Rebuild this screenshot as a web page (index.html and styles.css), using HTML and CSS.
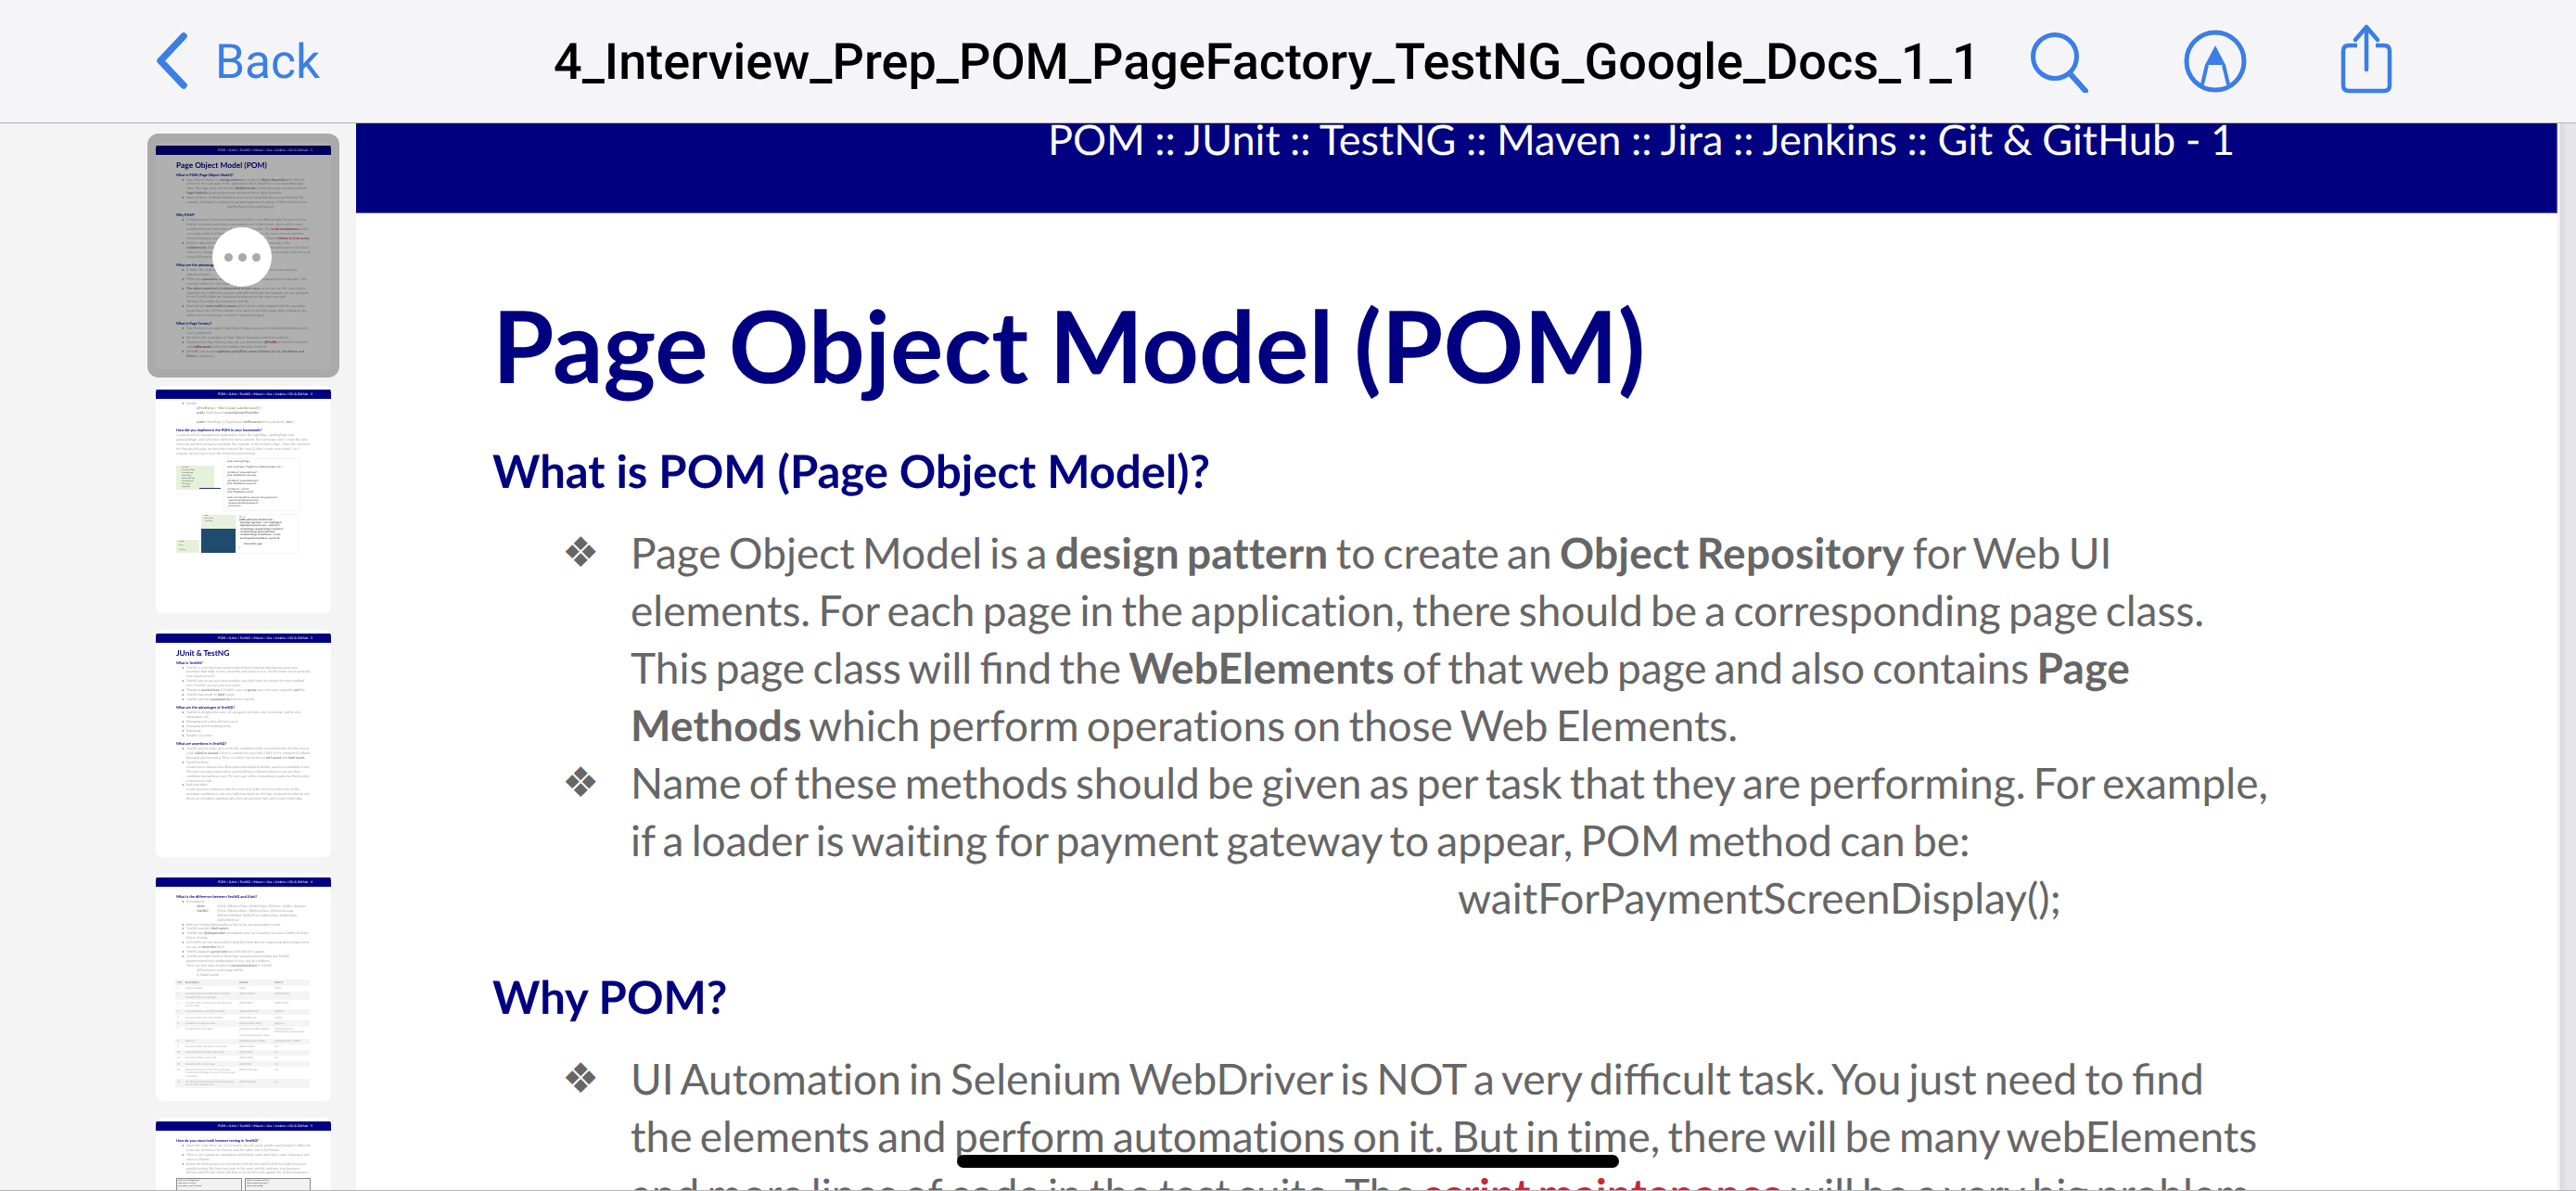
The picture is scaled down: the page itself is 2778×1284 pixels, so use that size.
FILE: index.html
```html
<!DOCTYPE html>
<html>
<head>
  <title>PDF Viewer</title>
  <meta name="viewport" content="width=device-width, initial-scale=1">
  <link rel="stylesheet" href="styles.css">
</head>
<body>
  <header class="topbar">
    <a class="back">
      <svg class="back-icon" width="37" height="61" viewBox="0 0 37 61"><path d="M33 4 L8 30.5 L33 57" fill="none" stroke="#3b7ee6" stroke-width="7.5" stroke-linecap="round" stroke-linejoin="round"/></svg>
      <span>Back</span>
    </a>
    <h1 class="doc-title">4_Interview_Prep_POM_PageFactory_TestNG_Google_Docs_1_1</h1>
    <div class="tools">
      <svg class="tool-search" width="66" height="66" viewBox="0 0 66 66"><circle cx="27" cy="27" r="23.5" fill="none" stroke="#3b7ee6" stroke-width="5"/><path d="M43 45 L60 64" fill="none" stroke="#3b7ee6" stroke-width="6" stroke-linecap="round"/></svg>
      <svg class="tool-markup" width="68" height="68" viewBox="0 0 68 68"><circle cx="34" cy="34" r="31" fill="none" stroke="#3b7ee6" stroke-width="5"/><path d="M34 17 L45 38 L23 38 Z" fill="#3b7ee6"/><path d="M25 38 L20 59 M43 38 L48 59" fill="none" stroke="#3b7ee6" stroke-width="4"/></svg>
      <svg class="tool-share" width="60" height="76" viewBox="0 0 60 76"><path d="M18 23 H9 Q3 23 3 29 V66 Q3 72 9 72 H47 Q53 72 53 66 V29 Q53 23 47 23 H38" fill="none" stroke="#3b7ee6" stroke-width="4.5"/><path d="M28 49 V3 M16 17 L28 3 L40 17" fill="none" stroke="#3b7ee6" stroke-width="4.5" stroke-linecap="round" stroke-linejoin="round"/></svg>
    </div>
  </header>

  <div class="viewer">
    <aside class="sidebar">
      <div class="thumb-selected">
        <div class="thumb">
          <div class="thumb-band">POM :: JUnit :: TestNG :: Maven :: Jira :: Jenkins :: Git &amp; GitHub - 1</div>
          <div class="thumb-body">
            <div class="thumb-h1">Page Object Model (POM)</div>
            <div class="thumb-h2 thumb-h2-sub">What is POM (Page Object Model)?</div>
            <ul class="thumb-list">
              <li>Page Object Model is a <b>design pattern</b> to create an <b>Object Repository</b> for Web UI elements. For each page in the application, there should be a corresponding page class. This page class will ﬁnd the <b>WebElements</b> of that web page and also contains <b>Page Methods</b> which perform operations on those Web Elements.</li>
              <li>Name of these methods should be given as per task that they are performing. For example, if a loader is waiting for payment gateway to appear, POM method can be:<div class="thumb-code">waitForPaymentScreenDisplay();</div></li>
            </ul>
            <div class="thumb-h2">Why POM?</div>
            <ul class="thumb-list">
              <li>UI Automation in Selenium WebDriver is NOT a very diﬃcult task. You just need to ﬁnd the elements and perform automations on it. But in time, there will be many webElements and more lines of code in the test suite. The <em>script maintenance</em> will be a very big problem. If there are so many tests that use the same element and that element changes, you will have to change all 80 scripts. That is <em>tedious &amp; error prone.</em></li>
              <li>A better approach is to keep all the elements of a page in one place, like <b>webElements</b>. All an activity here. The main script stays clean and easy to read. Even if there is a change in the element locator, we just change it in one place and not in all of our different test scripts.</li>
            </ul>
            <div class="thumb-h2">What are the advantages of POM?</div>
            <ul class="thumb-list">
              <li>It makes the code more readable, reusable and it also will have less and more optimised codes.</li>
              <li>POM says <b>operations</b> and flows in the UI should be separate from verification. This concept makes the code clean and simple.</li>
              <li><b>The object repository is independent of test cases</b>, so we can use the same object repository for a different purpose with different tools. For example, we can integrate it with TestNG/JUnit for functional testing and at the same time with JBehave/Cucumber for acceptance testing.</li>
              <li>Methods get <b>more realistic names</b> which can be easily mapped with the operation happening in the UI. For example, if we land on the home page after clicking on the button, the method name would be "gotoHomePage()".</li>
            </ul>
            <div class="thumb-h2">What is Page Factory?</div>
            <ul class="thumb-list">
              <li>Page Factory is an inbuilt Page Object Model concept for Selenium WebDriver but it is very optimized.</li>
              <li>We follow the separation of Page Object Repository and Test methods.</li>
              <li>Thanks to the Page Factory class, we use annotations <em>@FindBy</em> to ﬁnd the elements and <em>initElements</em> method to initialize the web elements.</li>
              <li>@FindBy can accept <b>tagName, partialText, name, linkText, id, css, className, and XPath</b> as attributes.</li>
            </ul>
          </div>
        </div>
        <div class="thumb-dim"></div>
        <div class="thumb-more"><i></i><i></i><i></i></div>
      </div>

      <div class="thumb">
        <div class="thumb-band">POM :: JUnit :: TestNG :: Maven :: Jira :: Jenkins :: Git &amp; GitHub - 2</div>
        <div class="thumb-body thumb-body-tight">
          <ul class="thumb-list">
            <li>Similar:
              <div class="thumb-snippet"><span class="green">@FindBy(css = "title='Create Calendar event']")</span><br><b>public</b> WebElement <b>createCalendarEventBtn</b>;<br><br><b>public</b> HomePage () { PageFactory.<b>initElements</b>(driver.getDriver(), <b>this</b>); }</div>
            </li>
          </ul>
          <div class="thumb-h2">How did you implement the POM in your framework?</div>
          <p class="thumb-p">I work on a fleet management application. I have the loginPage, LandingPage, and passwordPage, and I also have different menu options. For each page class, I store the web elements and their behavior methods. For example, in the Vehicles Page, I have the elements for that specific page and also their actions like save &amp; close, create new vehicle, etc. I separate all test cases from the elements and methods.</p>
          <div class="shot-row">
            <div class="shot-tree">
              <span>src/test</span><span>CommonSteps</span><span>LandingPage</span><span>LoginPage</span><span>PasswordPage</span><span>VehiclesPage</span><span>BasePage</span><span>LoginTest</span>
            </div>
            <div class="shot-arrow"></div>
            <div class="shot-code">public class LoginPage {<br><br>public LoginPage() { PageFactory.initElements(get(), this); }<br><br>@FindBy(id="prependedInput")<br>public WebElement username;<br><br>@FindBy(id="prependedInput2")<br>public WebElement password;<br><br>@FindBy(id="_submit")<br>public WebElement submit;<br><br>public void login(String username, String password) {<br>&nbsp;&nbsp;username.sendKeys(username);<br>&nbsp;&nbsp;password.sendKeys(password);<br>&nbsp;&nbsp;submit.click();<br>}</div>
          </div>
          <div class="shot-row-2">
            <div class="shot-side"><span>pages</span><span>tests</span><span>utilities</span></div>
            <div class="shot-stack">
              <div class="shot-stack-top">tests<br>&nbsp;login_tests<br>&nbsp;&nbsp;LoginTest</div>
              <div class="shot-stack-dark"></div>
            </div>
            <div class="shot-code shot-code-dark"><span class="green">@Test</span><br><b>public void</b> contactDetailsTest() {<br>&nbsp;LoginPage loginPage = new LoginPage();<br>&nbsp;loginPage.login(username, "sales100");<br>&nbsp;contactsPage.navigateToPage("Contacts");<br>&nbsp;contactInfoPage.getContactInfo();<br>&nbsp;contactInfoPage.contactName = new();<br>&nbsp;assertEquals(contactName, expected);<br>&nbsp;<br>&nbsp;&nbsp;&nbsp;&nbsp;&nbsp;&nbsp;"Information page";<br>}</div>
          </div>
        </div>
      </div>

      <div class="thumb">
        <div class="thumb-band">POM :: JUnit :: TestNG :: Maven :: Jira :: Jenkins :: Git &amp; GitHub - 3</div>
        <div class="thumb-body">
          <div class="thumb-h1">JUnit &amp; TestNG</div>
          <div class="thumb-h2 thumb-h2-sub">What is TestNG?</div>
          <ul class="thumb-list">
            <li>TestNG is a testing framework inspired from JUnit but introducing some new functions that make it more powerful and easier to use. TestNG helps you to generate test reports as well.</li>
            <li>TestNG can act as your Java compiler; you don't have to include the main method since TestNG can run your test codes.</li>
            <li>Thanks to <b>annotations</b> in TestNG, you can <b>group</b> your test cases using the <b>xml</b> file.</li>
            <li>TestNG has a built-in <b>html</b> report.</li>
            <li>TestNG can also <b>parameterize</b> from the xml file.</li>
          </ul>
          <div class="thumb-h2">What are the advantages of TestNG?</div>
          <ul class="thumb-list">
            <li>TestNG is designed to cover all categories of tests: unit, functional, end-to-end, integration, etc.</li>
            <li>Managing test suites and test cases.</li>
            <li>Grouping and Prioritizing tests.</li>
            <li>Reporting.</li>
            <li>Parallel execution.</li>
          </ul>
          <div class="thumb-h2">What are assertions in TestNG?</div>
          <ul class="thumb-list">
            <li>TestNG asserts helps us to verify the condition of the test and decide whether test is a fail, <b>failed or passed</b>. A test is considered successful ONLY if it is completed without throwing any exception. There is a difference between <b>soft assert</b> and <b>hard assert</b>.</li>
            <li>Hard Assertion:<br>A hard assert throws AssertException immediately and the assertion condition is met. The test execution stops when an AssertError is thrown whenever an assertion condition has not been met. The test case will be immediately marked as Failed when a hard assert fails.</li>
            <li>Soft Assertion:<br>A soft assertion continues with the next step of the test even when one of the assertion conditions is not met. Soft Assertions are the type of assertions that do not throw an exception automatically when an assertion fails and record it internally.</li>
          </ul>
        </div>
      </div>

      <div class="thumb">
        <div class="thumb-band">POM :: JUnit :: TestNG :: Maven :: Jira :: Jenkins :: Git &amp; GitHub - 4</div>
        <div class="thumb-body">
          <div class="thumb-h2 thumb-h2-first">What is the difference between TestNG and JUnit?</div>
          <ul class="thumb-list">
            <li>Annotations:
              <div class="thumb-notes"><span><b>JUnit:</b></span><span>@Test, @BeforeClass, @AfterClass, @Before, @After, @Ignore</span><span><b>TestNG:</b></span><span>@Test, @BeforeSuite, @BeforeClass, @BeforeGroups, @BeforeMethod, @AfterTest, @AfterClass, @AfterSuite, @AfterMethod</span></div>
            </li>
            <li>Both are testing frameworks to help us to run automation scripts.</li>
            <li>TestNG provides <b>html report.</b></li>
            <li>TestNG has <b>@dataprovider</b> annotation same as Cucumber Scenario Outline for Data Driven Testing.</li>
            <li>In TestNG, we can do parallel testing but JUnit doesn't support parallel testing unless we use an <b>extension</b> for it.</li>
            <li>TestNG supports <b>group test</b> but JUnit doesn't support.</li>
            <li>TestNG and JUnit both of them have parameterized testing but TestNG parameterized test configuration is very easy to configure.<br>There are two ways to achieve <b>parameterization</b> in TestNG.
              <div class="thumb-sub">@Parameters and testng.xml file</div>
              <div class="thumb-sub">@ DataProvider</div>
            </li>
          </ul>
          <table class="thumb-table">
            <tr class="row-alt"><th>S.N.</th><th>Description</th><th>TestNG</th><th>JUnit 4</th></tr>
            <tr><td>1</td><td>Test annotation</td><td>@Test</td><td>@Test</td></tr>
            <tr class="row-alt"><td>2</td><td>Executes before the first test method is invoked in the current class</td><td>@BeforeClass</td><td>@BeforeClass</td></tr>
            <tr><td>3</td><td>Executes after all the test methods in the current class</td><td>@AfterClass</td><td>@AfterClass</td></tr>
            <tr class="row-alt"><td>4</td><td>Executes before each test method</td><td>@BeforeMethod</td><td>@Before</td></tr>
            <tr><td>5</td><td>Executes after each test method</td><td>@AfterMethod</td><td>@After</td></tr>
            <tr class="row-alt"><td>6</td><td>annotation to ignore a test</td><td>@Test(enable=false)</td><td>@Ignore</td></tr>
            <tr><td>7</td><td>annotation for exception</td><td>@Test(expectedExceptions = ArithmeticException.class)</td><td>@Test(expected = ArithmeticException.class)</td></tr>
            <tr class="row-alt"><td>8</td><td>timeout</td><td>@Test(timeout = 1000)</td><td>@Test(timeout = 1000)</td></tr>
            <tr><td>9</td><td>Executes before all tests in the suite</td><td>@BeforeSuite</td><td>n/a</td></tr>
            <tr class="row-alt"><td>10</td><td>Executes after all tests in the suite</td><td>@AfterSuite</td><td>n/a</td></tr>
            <tr><td>11</td><td>Executes before a test runs</td><td>@BeforeTest</td><td>n/a</td></tr>
            <tr class="row-alt"><td>12</td><td>Executes after a test runs</td><td>@AfterTest</td><td>n/a</td></tr>
            <tr><td>13</td><td>Executes before the first test method is invoked that belongs to any of these groups is invoked</td><td>@BeforeGroups</td><td>n/a</td></tr>
            <tr class="row-alt"><td>14</td><td>run after the last test method that belongs to any of the groups here</td><td>@AfterGroups</td><td>n/a</td></tr>
          </table>
        </div>
      </div>

      <div class="thumb">
        <div class="thumb-band">POM :: JUnit :: TestNG :: Maven :: Jira :: Jenkins :: Git &amp; GitHub - 5</div>
        <div class="thumb-body">
          <div class="thumb-h2 thumb-h2-first">How do you cross/multi browser testing in TestNG?</div>
          <ul class="thumb-list">
            <li>Inside the suite there are 3 test frames, thread count, parallel and included 2 different tests, one of them is for Chrome and the other one is for Firefox.</li>
            <li>There is one parameter annotation and include name and value; name is browser and value is Chrome.</li>
            <li>Below the first picture is a screenshot with the xml and TestNG for multi cross and parallel testing. We have two tests in the same xml file and have two browsers (chrome and firefox) which will help us to run the tests against the defined browsers.</li>
          </ul>
          <div class="shot-xml">
            <div class="shot-xml-pane">suite name="Regression"<br>test name="chrome"<br>parameter name="browser"</div>
            <div class="shot-xml-pane">public class BrowserTest {<br>@Parameters("browser")<br>public void setUp()</div>
          </div>
        </div>
      </div>
    </aside>

    <main class="doc">
      <div class="doc-band">POM :: JUnit :: TestNG :: Maven :: Jira :: Jenkins :: Git &amp; GitHub - 1</div>
      <section class="doc-body">
        <h2 class="doc-h1">Page Object Model (POM)</h2>
        <h3 class="doc-h2">What is POM (Page Object Model)?</h3>
        <ul class="doc-list">
          <li>Page Object Model is a <strong>design pattern</strong> to create an <strong>Object Repository</strong> for Web UI elements. For each page in the application, there should be a corresponding page class. This page class will ﬁnd the <strong>WebElements</strong> of that web page and also contains <strong>Page Methods</strong> which perform operations on those Web Elements.</li>
          <li>Name of these methods should be given as per task that they are performing. For example, if a loader is waiting for payment gateway to appear, POM method can be:
            <div class="doc-code">waitForPaymentScreenDisplay();</div>
          </li>
        </ul>
        <h3 class="doc-h2">Why POM?</h3>
        <ul class="doc-list">
          <li>UI Automation in Selenium WebDriver is NOT a very diﬃcult task. You just need to ﬁnd the elements and perform automations on it. But in time, there will be many webElements and more lines of code in the test suite. The <strong class="doc-red">script maintenance</strong> will be a very big problem.</li>
        </ul>
      </section>
    </main>
    <div class="doc-edge"></div>
  </div>

  <div class="home-bar"></div>
</body>
</html>
```

FILE: styles.css
```css
* { box-sizing: border-box; }
html, body { height: 100%; }
body { margin: 0; overflow: hidden; background: #f4f4f4; font-family: "Lato", sans-serif; font-variant-ligatures: none; text-rendering: geometricPrecision; display: flex; flex-direction: column; }

/* top bar */
.topbar { flex: none; height: 133px; background: #f5f5f7; border-bottom: 1px solid #b4b4b4; display: flex; align-items: flex-start; }
.back { display: flex; align-items: flex-start; width: 597px; padding: 35px 0 0 165px; color: #3b7ee6; font-size: 51.5px; line-height: 64px; font-family: "Roboto", sans-serif; }
.back-icon { margin-right: 30px; }
.doc-title { margin: 0; width: 1592px; padding-top: 38px; font-size: 54px; line-height: 60px; font-weight: 500; color: #000; font-family: "Roboto", sans-serif; white-space: nowrap; }
.tools { display: flex; align-items: flex-start; }
.tool-search { margin-top: 34px; }
.tool-markup { margin: 32px 0 0 100px; }
.tool-share { margin: 26px 0 0 101px; }

/* layout */
.viewer { flex: 1; min-height: 0; display: flex; border-bottom: 1px solid #b4b4b4; }
.sidebar { flex: none; width: 384px; padding: 20px 0 0 168px; overflow: hidden; }
.doc { flex: none; width: 2374px; background: #fff; overflow: hidden; }
.doc-edge { flex: 1; background: linear-gradient(90deg, #f2f2f2 0, #f2f2f2 3px, #d8d8dc 3px, #e6e6ea 10px); }

/* thumbnails */
.thumb { width: 189px; height: 245px; margin-bottom: 18px; background: #fff; border-radius: 7px; overflow: hidden; padding-top: 4px; color: #a2a2a2; font-size: 3.58px; line-height: 4.9px; filter: blur(.35px); }
.thumb-selected { position: relative; width: 207px; height: 263px; margin: -9px 0 9px -9px; padding: 9px; background: #f6f6f6; border-radius: 12px; overflow: hidden; }
.thumb-selected .thumb { margin: 0; }
.thumb-dim { position: absolute; top: 0; right: 0; bottom: 0; left: 0; background: rgba(0, 0, 0, .31); }
.thumb-more { position: absolute; top: 101px; left: 70px; width: 64px; height: 64px; border-radius: 50%; background: #fff; display: flex; align-items: center; justify-content: center; gap: 6px; }
.thumb-more i { width: 9px; height: 9px; border-radius: 50%; background: #aaa; }
.thumb-band { height: 10px; padding-left: 67px; background: #000080; color: #fff; font-size: 3.55px; line-height: 9px; white-space: nowrap; }
.thumb-body { padding: 5px 22px 0 22px; }
.thumb-body-tight { padding-top: 3px; }
.thumb-h1 { color: #000080; font-size: 8.4px; line-height: 12px; font-weight: 700; }
.thumb-h2 { margin: 3px 0 1.5px; color: #000080; font-size: 3.9px; line-height: 5px; font-weight: 700; }
.thumb-h2-sub { margin-top: 1.5px; margin-bottom: 1px; }
.thumb-h2-first { margin-top: 2.5px; }
.thumb-list { margin: 0; padding: 0 0 0 11px; list-style: none; }
.thumb-list li { position: relative; }
.thumb-list li::before { content: "\2756"; position: absolute; left: -5px; font-family: "DejaVu Sans", sans-serif; font-size: 3px; color: #777; }
.thumb-list b { color: #808080; }
.thumb-list em { color: #b9393f; font-style: normal; font-weight: 700; }
.thumb-code { padding-left: 44px; }
.thumb-p { margin: 0; }
.thumb-snippet { padding-left: 11px; font-size: 3.4px; white-space: nowrap; }
.green { color: #5c8a3a; }
.thumb-notes { display: grid; grid-template-columns: 22px 1fr; padding-left: 11px; }
.thumb-sub { padding-left: 11px; }
.thumb-table { width: 100%; margin: 3px 0 0 -1px; border-collapse: collapse; font-size: 2.8px; line-height: 3.4px; color: #a8a8a8; }
.thumb-table th, .thumb-table td { padding: 1.4px 2px; text-align: left; vertical-align: top; font-weight: 400; }
.thumb-table th { font-weight: 700; color: #808080; }
.thumb-table th:first-child, .thumb-table td:first-child { width: 9px; }
.thumb-table td:nth-child(2) { width: 58px; }
.thumb-table td:nth-child(3) { width: 38px; }
.row-alt { background: #f4f4f4; }

.shot-row { display: flex; margin-top: 3px; height: 55px; }
.shot-tree { flex: none; align-self: flex-start; display: flex; flex-direction: column; width: 41px; height: 26px; margin-top: 7px; padding: 1px 0 0 6px; background: #e6f1dc; color: #555; font-size: 2.2px; line-height: 3px; overflow: hidden; }
.shot-arrow { flex: none; width: 23px; height: 1.5px; margin: 31px 0 0 -16px; background: #333366; }
.shot-code { flex: none; width: 81px; margin-left: 4px; padding: 1px 0 0 3px; box-shadow: 0 0 1px #bbb; color: #444; font-size: 2.4px; line-height: 3px; white-space: nowrap; overflow: hidden; }
.shot-row-2 { display: flex; height: 41px; margin-top: 5px; }
.shot-side { flex: none; display: flex; flex-direction: column; align-self: flex-end; width: 25px; padding: 0 0 0 3px; background: #e6f1dc; color: #555; font-size: 2.2px; line-height: 4.6px; }
.shot-stack { flex: none; width: 37px; margin-left: 2px; }
.shot-stack-top { height: 15px; padding-left: 3px; background: #e6f1dc; font-size: 2px; line-height: 3px; color: #555; overflow: hidden; }
.shot-stack-dark { height: 26px; background: #1f4b6e; }
.shot-code-dark { width: 66px; margin-left: 1px; color: #222; font-size: 2.6px; line-height: 3.3px; }
.shot-xml { display: flex; gap: 3px; height: 30px; margin-top: 3px; }
.shot-xml-pane { flex: 1; padding: 1px; background: #f2f2f2; border: 1px solid #888; color: #333; font-size: 2.2px; line-height: 3px; white-space: nowrap; overflow: hidden; }

/* document */
.doc-band { height: 97px; padding-left: 746px; background: #000080; border-bottom: 1px solid #5a5aa8; border-right: 1px solid #5a5aa8; color: #fff; font-size: 45px; line-height: 35px; word-spacing: -1px; white-space: nowrap; }
.doc-body { padding: 82px 308px 0 147px; color: #666; font-size: 46px; line-height: 62px; word-spacing: -3.5px; }
.doc-body strong { letter-spacing: .25px; }
.doc-h1 { margin: 0; color: #000080; font-size: 107.5px; line-height: 120px; font-weight: 700; word-spacing: -4px; }
.doc-h2 { margin: 45px 0 26px; color: #000080; font-size: 49px; line-height: 62px; font-weight: 700; word-spacing: 0; }
.doc-list { margin: 0; padding: 0 0 0 149px; list-style: none; }
.doc-list li { position: relative; }
.doc-list li::before { content: "\2756"; position: absolute; left: -74px; font-family: "DejaVu Sans", sans-serif; font-size: 45px; color: #666; }
.doc-code { padding-left: 892px; }
.doc-red { color: #c6283a; }

.home-bar { position: absolute; left: 1032px; top: 1245px; width: 714px; height: 14px; border-radius: 7px; background: #000; }
```
